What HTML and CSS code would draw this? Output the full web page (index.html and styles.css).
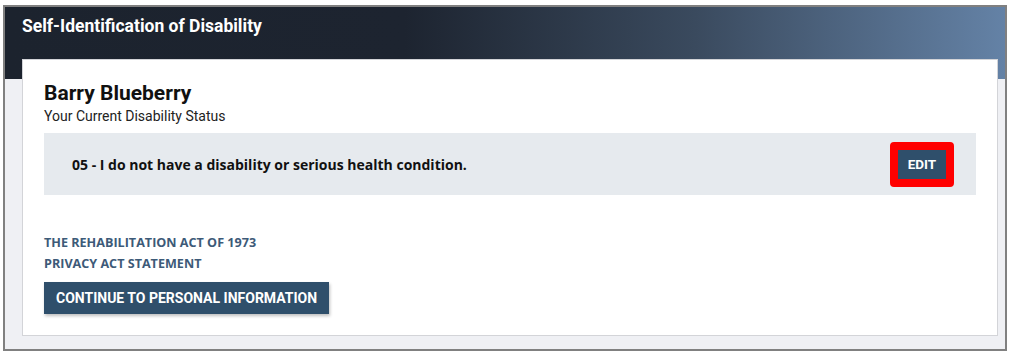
FILE: index.html
```html
<!DOCTYPE html>
<html lang="en">
<head>
    <meta charset="UTF-8">
    <title>Self-Identification of Disability</title>
    <link rel="stylesheet" href="styles.css">
</head>
<body>
    <div class="frame">
        <div class="page-title">Self-Identification of Disability</div>

        <div class="card">
            <h1 class="name">Barry Blueberry</h1>
            <div class="subtitle">Your Current Disability Status</div>

            <div class="status-box">
                <span class="status-text">05 - I do not have a disability or serious health condition.</span>
                <span class="highlight">
                    <button class="btn btn-small">EDIT</button>
                </span>
            </div>

            <div class="links">
                <a href="#" class="link">THE REHABILITATION ACT OF 1973</a>
                <a href="#" class="link">PRIVACY ACT STATEMENT</a>
            </div>

            <button class="btn btn-continue">CONTINUE TO PERSONAL INFORMATION</button>
        </div>
    </div>
</body>
</html>
```

FILE: styles.css
```css
body {
    margin: 0;
    background: #fff;
    font-family: Roboto, "Liberation Sans", sans-serif;
}
.frame {
    margin: 5px 3px 4px 3px;
    border: 2px solid #808080;
    background:
        linear-gradient(90deg, #1c232e 0%, #1d2430 40%, #3a4a5e 69%, #6482a6 100%) top / 100% 72px no-repeat,
        #eff0f4;
    padding-bottom: 13px;
}
.page-title {
    height: 52px;
    box-sizing: border-box;
    padding: 9px 0 0 17px;
    color: #fff;
    font-size: 17.5px;
    font-weight: bold;
}
.card {
    margin: 0 7px 0 17px;
    background: #fff;
    border: 1px solid #d3d4d8;
    padding: 20px 21px 21px 21px;
}
.name {
    margin: 0;
    font-size: 21px;
    line-height: 26px;
    font-weight: bold;
    color: #111;
}
.subtitle {
    font-size: 14px;
    line-height: 20px;
    color: #222;
    margin-bottom: 7px;
}
.status-box {
    background: #e6eaee;
    height: 62px;
    display: flex;
    align-items: center;
    justify-content: space-between;
    padding: 0 22px 0 28px;
}
.status-text {
    font-family: "Open Sans", sans-serif;
    font-size: 14px;
    font-weight: bold;
    color: #111;
}
.highlight {
    display: flex;
    border: 8px solid #ff0000;
    border-radius: 4px;
}
.btn {
    background-color: #2f4f6b;
    color: #fff;
    border: none;
    font-family: Roboto, "Liberation Sans", sans-serif;
    font-weight: bold;
    cursor: pointer;
}
.btn-small {
    width: 48px;
    height: 29px;
    font-size: 13.5px;
    padding: 0;
}
.links {
    margin-top: 39px;
    display: flex;
    flex-direction: column;
    gap: 4px;
}
.link {
    font-family: "Open Sans", sans-serif;
    font-size: 12.6px;
    line-height: 17px;
    font-weight: bold;
    color: #3d5a78;
    text-decoration: none;
}
.btn-continue {
    margin-top: 10px;
    height: 32px;
    padding: 0 12px;
    font-size: 14px;
    box-shadow: 1px 2px 3px rgba(0, 0, 0, 0.25);
}
```
